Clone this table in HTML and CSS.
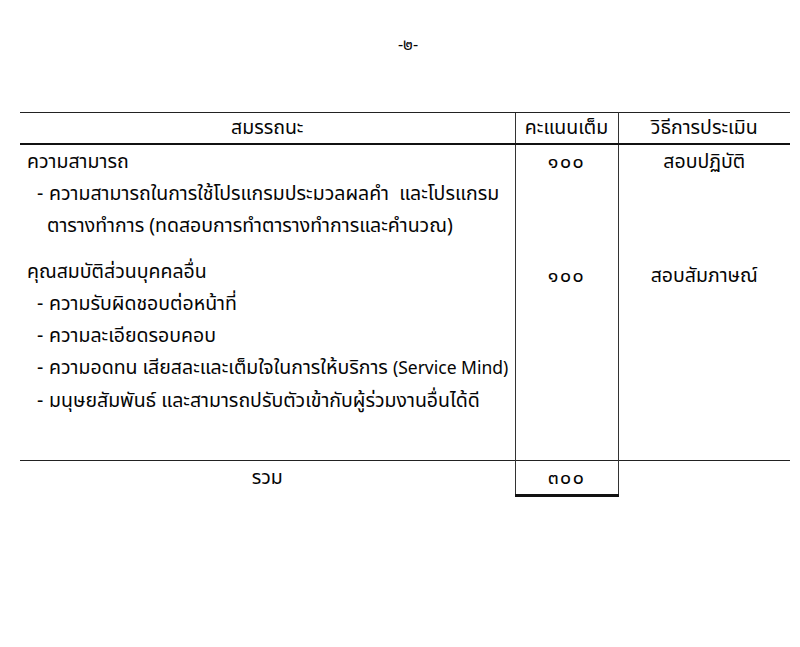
FILE: index.html
```html
<!DOCTYPE html>
<html lang="th">
<head>
<meta charset="utf-8">
<title>สมรรถนะ</title>
<link rel="stylesheet" href="styles.css">
</head>
<body>
<div class="page">
  <div class="page-no">-๒-</div>
  <table class="grid">
    <colgroup>
      <col class="c1"><col class="c2"><col class="c3">
    </colgroup>
    <thead>
      <tr>
        <th>สมรรถนะ</th>
        <th class="mid">คะแนนเต็ม</th>
        <th class="last">วิธีการประเมิน</th>
      </tr>
    </thead>
    <tbody>
      <tr class="r1">
        <td>
          <div class="line">ความสามารถ</div>
          <div class="line item"><span class="dash">-</span>ความสามารถในการใช้โปรแกรมประมวลผลคำ&nbsp; และโปรแกรม</div>
          <div class="line cont">ตารางทำการ (ทดสอบการทำตารางทำการและคำนวณ)</div>
        </td>
        <td class="mid num">๑๐๐</td>
        <td class="last method">สอบปฏิบัติ</td>
      </tr>
      <tr class="r2">
        <td>
          <div class="line">คุณสมบัติส่วนบุคคลอื่น</div>
          <div class="line item"><span class="dash">-</span>ความรับผิดชอบต่อหน้าที่</div>
          <div class="line item"><span class="dash">-</span>ความละเอียดรอบคอบ</div>
          <div class="line item"><span class="dash">-</span>ความอดทน เสียสละและเต็มใจในการให้บริการ <span class="latin">(Service Mind)</span></div>
          <div class="line item"><span class="dash">-</span>มนุษยสัมพันธ์ และสามารถปรับตัวเข้ากับผู้ร่วมงานอื่นได้ดี</div>
        </td>
        <td class="mid num">๑๐๐</td>
        <td class="last method">สอบสัมภาษณ์</td>
      </tr>
    </tbody>
    <tfoot>
      <tr>
        <td class="sum-label">รวม</td>
        <td class="mid num total">๓๐๐</td>
        <td class="last blank"></td>
      </tr>
    </tfoot>
  </table>
</div>
</body>
</html>
```
FILE: styles.css
```css
html, body {
  margin: 0;
  padding: 0;
  background: #fff;
}
body {
  font-family: "Noto Sans Thai", "Noto Sans Thai UI", "Noto Sans", "DejaVu Sans", sans-serif;
  color: #050505;
  font-size: 19.5px;
}
.page {
  width: 800px;
  height: 647px;
  padding-top: 30px;
  box-sizing: border-box;
}
.page-no {
  text-align: center;
  padding-left: 16px;
  line-height: 30px;
  font-size: 16px;
}
.grid {
  margin-top: 52px;
  margin-left: 20px;
  width: 770px;
  border-collapse: collapse;
  table-layout: fixed;
}
.c1 { width: 495px; }
.c2 { width: 103px; }
.c3 { width: 172px; }
th {
  font-weight: normal;
  height: 30px;
  padding: 0;
  line-height: 30px;
  border-top: 1.5px solid #222;
  border-bottom: 2px solid #111;
  text-align: center;
}
td {
  padding: 0;
  vertical-align: top;
}
.mid {
  border-left: 1px solid #333;
  border-right: 1px solid #333;
}
.line {
  line-height: 32px;
  white-space: nowrap;
}
.latin { font-size: 17.5px; }
td:first-child { padding-left: 7px; }
.item { padding-left: 10px; }
.cont { padding-left: 20px; }
.dash { display: inline-block; width: 12px; }
.num, .method {
  text-align: center;
  line-height: 32px;
}
.num { letter-spacing: 1.5px; }
.r1 td { padding-top: 1px; padding-bottom: 14px; }
.r2 td { padding-bottom: 43px; }
.r2 .num, .r2 .method { padding-top: 4px; }
tfoot td {
  border-top: 1px solid #222;
  height: 29px;
  line-height: 29px;
  padding-top: 1px;
  text-align: center;
  vertical-align: middle;
}
tfoot td.sum-label { padding-left: 0; }
.total { border-bottom: 3px solid #111; }
tfoot .last { border-left: 1px solid #333; }
```
